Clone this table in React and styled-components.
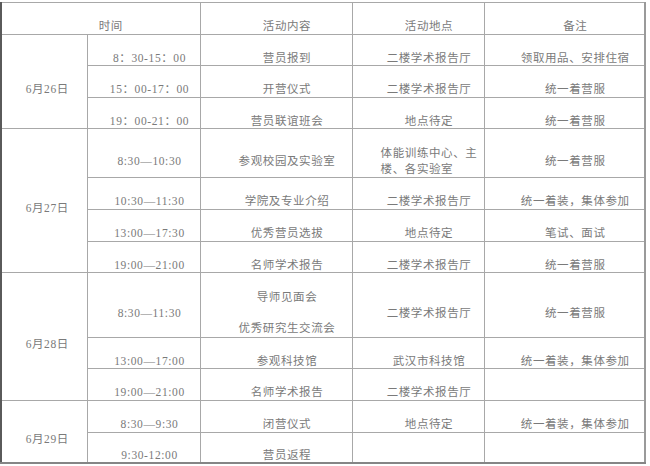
import React from 'react';
import styled, { createGlobalStyle } from 'styled-components';

const GlobalStyle = createGlobalStyle`
  html, body {
    margin: 0;
    padding: 0;
    background: #ffffff;
  }
  body {
    padding-top: 2px;
    font-family: "Liberation Serif", "Noto Sans CJK SC", serif;
  }
`;

const Table = styled.table`
  width: 644px;
  border-collapse: collapse;
  table-layout: fixed;
  border-top: 1px solid #8a8a8a;
  border-left: 2px solid #5a5a5a;
  border-right: 2px solid #9a9a9a;
  border-bottom: 2px solid #858585;
  color: #7a7a7a;
  font-size: 11.5px;
  letter-spacing: 0.6px;
`;

const Row = styled.tr`
  height: ${(p) => p.$h}px;
`;

const Cell = styled.td`
  border: 1px solid #a8a8a8;
  padding: 15px 0 0 ${(p) => p.$indent || 22}px;
  vertical-align: middle;
  text-align: center;
  line-height: 14px;
  white-space: nowrap;
`;

const Para = styled.div`
  & + & {
    margin-top: 17px;
  }
`;

const Lines = styled.div`
  display: inline-block;
  text-align: left;
  line-height: 16px;
`;

const schedule = [
  {
    date: '6月26日',
    rows: [
      { h: 31, time: '8：30-15：00', content: ['营员报到'], place: ['二楼学术报告厅'], note: '领取用品、安排住宿' },
      { h: 32, time: '15：00-17：00', content: ['开营仪式'], place: ['二楼学术报告厅'], note: '统一着营服' },
      { h: 31, time: '19：00-21：00', content: ['营员联谊班会'], place: ['地点待定'], note: '统一着营服' },
    ],
  },
  {
    date: '6月27日',
    rows: [
      { h: 49, time: '8:30—10:30', content: ['参观校园及实验室'], place: ['体能训练中心、主', '楼、各实验室'], note: '统一着营服' },
      { h: 32, time: '10:30—11:30', content: ['学院及专业介绍'], place: ['二楼学术报告厅'], note: '统一着装，集体参加' },
      { h: 32, time: '13:00—17:30', content: ['优秀营员选拔'], place: ['地点待定'], note: '笔试、面试' },
      { h: 31, time: '19:00—21:00', content: ['名师学术报告'], place: ['二楼学术报告厅'], note: '统一着营服' },
    ],
  },
  {
    date: '6月28日',
    rows: [
      { h: 65, time: '8:30—11:30', content: ['导师见面会', '优秀研究生交流会'], place: ['二楼学术报告厅'], note: '统一着营服' },
      { h: 31, time: '13:00—17:00', content: ['参观科技馆'], place: ['武汉市科技馆'], note: '统一着装，集体参加' },
      { h: 32, time: '19:00—21:00', content: ['名师学术报告'], place: ['二楼学术报告厅'], note: '' },
    ],
  },
  {
    date: '6月29日',
    rows: [
      { h: 32, time: '8:30—9:30', content: ['闭营仪式'], place: ['地点待定'], note: '统一着装，集体参加' },
      { h: 30, time: '9:30-12:00', content: ['营员返程'], place: [''], note: '' },
    ],
  },
];

function PlaceCell({ lines }) {
  return (
    <Cell>
      {lines.length > 1 ? (
        <Lines>
          {lines.map((l) => (
            <div key={l}>{l}</div>
          ))}
        </Lines>
      ) : (
        lines[0]
      )}
    </Cell>
  );
}

export default function App() {
  return (
    <>
      <GlobalStyle />
      <Table>
        <colgroup>
          <col style={{ width: 86 }} />
          <col style={{ width: 113 }} />
          <col style={{ width: 152 }} />
          <col style={{ width: 132 }} />
          <col style={{ width: 161 }} />
        </colgroup>
        <tbody>
          <Row $h={32}>
            <Cell colSpan={2} $indent={20}>时间</Cell>
            <Cell>活动内容</Cell>
            <Cell>活动地点</Cell>
            <Cell>备注</Cell>
          </Row>
          {schedule.map((day) =>
            day.rows.map((r, i) => (
              <Row key={day.date + i} $h={r.h}>
                {i === 0 && (
                  <Cell rowSpan={day.rows.length} $indent={6}>
                    {day.date}
                  </Cell>
                )}
                <Cell $indent={12}>{r.time}</Cell>
                <Cell>
                  {r.content.map((c) => (
                    <Para key={c}>{c}</Para>
                  ))}
                </Cell>
                <PlaceCell lines={r.place} />
                <Cell>{r.note}</Cell>
              </Row>
            ))
          )}
        </tbody>
      </Table>
    </>
  );
}
